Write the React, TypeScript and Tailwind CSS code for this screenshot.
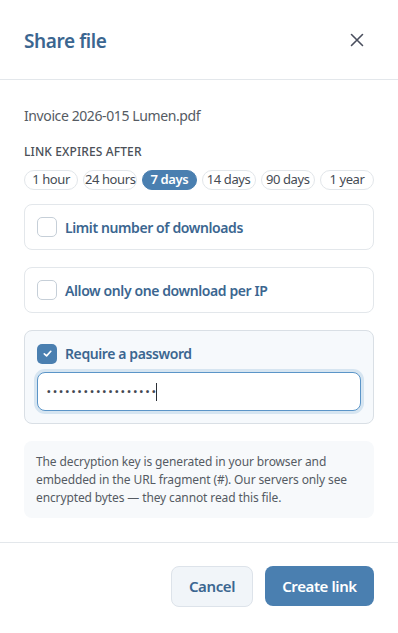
import React from "react";

const chips = ["1 hour", "24 hours", "7 days", "14 days", "90 days", "1 year"];

export default function App() {
  return (
    <div
      className="w-[398px] h-[633px] bg-white flex flex-col tracking-[-0.025em]"
      style={{ fontFamily: '"Noto Sans", "Open Sans", sans-serif' }}
    >
      <div className="h-[80px] px-6 pt-[3px] flex items-center justify-between border-b border-[#e3e7eb]">
        <h1 className="text-[19px] font-semibold text-[#3b6690] leading-none">Share file</h1>
        <button className="w-6 h-6 flex items-center justify-center text-[#4a4f5e] mr-[5px] mb-[2px]">
          <svg width="14" height="14" viewBox="0 0 14 14" fill="none" stroke="currentColor" strokeWidth="1.6" strokeLinecap="round">
            <path d="M1.5 1.5L12.5 12.5M12.5 1.5L1.5 12.5" />
          </svg>
        </button>
      </div>
      <div className="px-6 pt-[26px] flex flex-col">
        <div className="text-[14px] text-[#555b63] leading-[20px]">Invoice 2026-015 Lumen.pdf</div>
        <div className="mt-[18px] text-[12px] font-medium tracking-[0.01em] text-[#4b5058] leading-[16px]">LINK EXPIRES AFTER</div>
        <div className="mt-[10px] grid grid-cols-6 gap-[5px]">
          {chips.map((c) => (
            <div
              key={c}
              className={
                c === "7 days"
                  ? "h-[20px] whitespace-nowrap rounded-full bg-[#4a7fb0] text-white text-[13px] font-semibold flex items-center justify-center border border-[#4a7fb0]"
                  : "h-[20px] whitespace-nowrap rounded-full bg-white text-[#454b54] text-[13px] flex items-center justify-center border border-[#e2e6ea]"
              }
            >
              {c}
            </div>
          ))}
        </div>
        <div className="mt-[14px] h-[46px] rounded-[8px] border border-[#e3e7eb] flex items-center px-[12px] gap-[8px]">
          <div className="w-[20px] h-[20px] rounded-[5px] border-[1.5px] border-[#c6cfd8] bg-white" />
          <span className="text-[14px] font-semibold text-[#3b6690]">Limit number of downloads</span>
        </div>
        <div className="mt-[17px] h-[46px] rounded-[8px] border border-[#e3e7eb] flex items-center px-[12px] gap-[8px]">
          <div className="w-[20px] h-[20px] rounded-[5px] border-[1.5px] border-[#c6cfd8] bg-white" />
          <span className="text-[14px] font-semibold text-[#3b6690]">Allow only one download per IP</span>
        </div>
        <div className="mt-[17px] rounded-[8px] border border-[#d9dfe5] bg-[#f6f9fc] px-[12px] pt-[12px] pb-[12px] flex flex-col">
          <div className="flex items-center gap-[8px] h-[21px]">
            <div className="w-[20px] h-[20px] rounded-[5px] bg-[#4a7fb0] flex items-center justify-center">
              <svg width="11" height="11" viewBox="0 0 12 12" fill="none" stroke="white" strokeWidth="1.8" strokeLinecap="round" strokeLinejoin="round">
                <path d="M2.5 6.3L5 8.6L9.6 3.6" />
              </svg>
            </div>
            <span className="text-[14px] font-semibold text-[#3b6690]">Require a password</span>
          </div>
          <div className="mt-[8px] h-[39px] rounded-[8px] border border-[#5b95c8] bg-white shadow-[0_0_0_3px_rgba(91,149,200,0.2)] flex items-center px-[9px]">
            <span className="text-[#3f4650] text-[9.5px] tracking-[2.6px] leading-none font-bold">••••••••••••••••••</span>
            <span className="w-[1px] h-[18px] bg-[#2b2f36] -ml-[2px]" />
          </div>
        </div>
        <div className="mt-[17px] rounded-[8px] bg-[#f7f9fb] px-[12px] pt-[12px] pb-[11px] text-[12px] leading-[18px] text-[#555b63] tracking-[-0.01em]">
          The decryption key is generated in your browser and embedded in the URL fragment (#). Our servers only see encrypted bytes — they cannot read this file.
        </div>
      </div>
      <div className="mt-[24px] border-t border-[#e3e7eb] px-6 pt-[23px] flex justify-end gap-[12px]">
        <button className="h-[41px] w-[82px] rounded-[8px] border border-[#dde3ea] bg-[#f1f5f9] text-[15px] font-semibold text-[#3b6690]">
          Cancel
        </button>
        <button className="h-[40px] w-[109px] rounded-[8px] bg-[#4a7fb0] text-[15px] font-semibold text-white">
          Create link
        </button>
      </div>
    </div>
  );
}
